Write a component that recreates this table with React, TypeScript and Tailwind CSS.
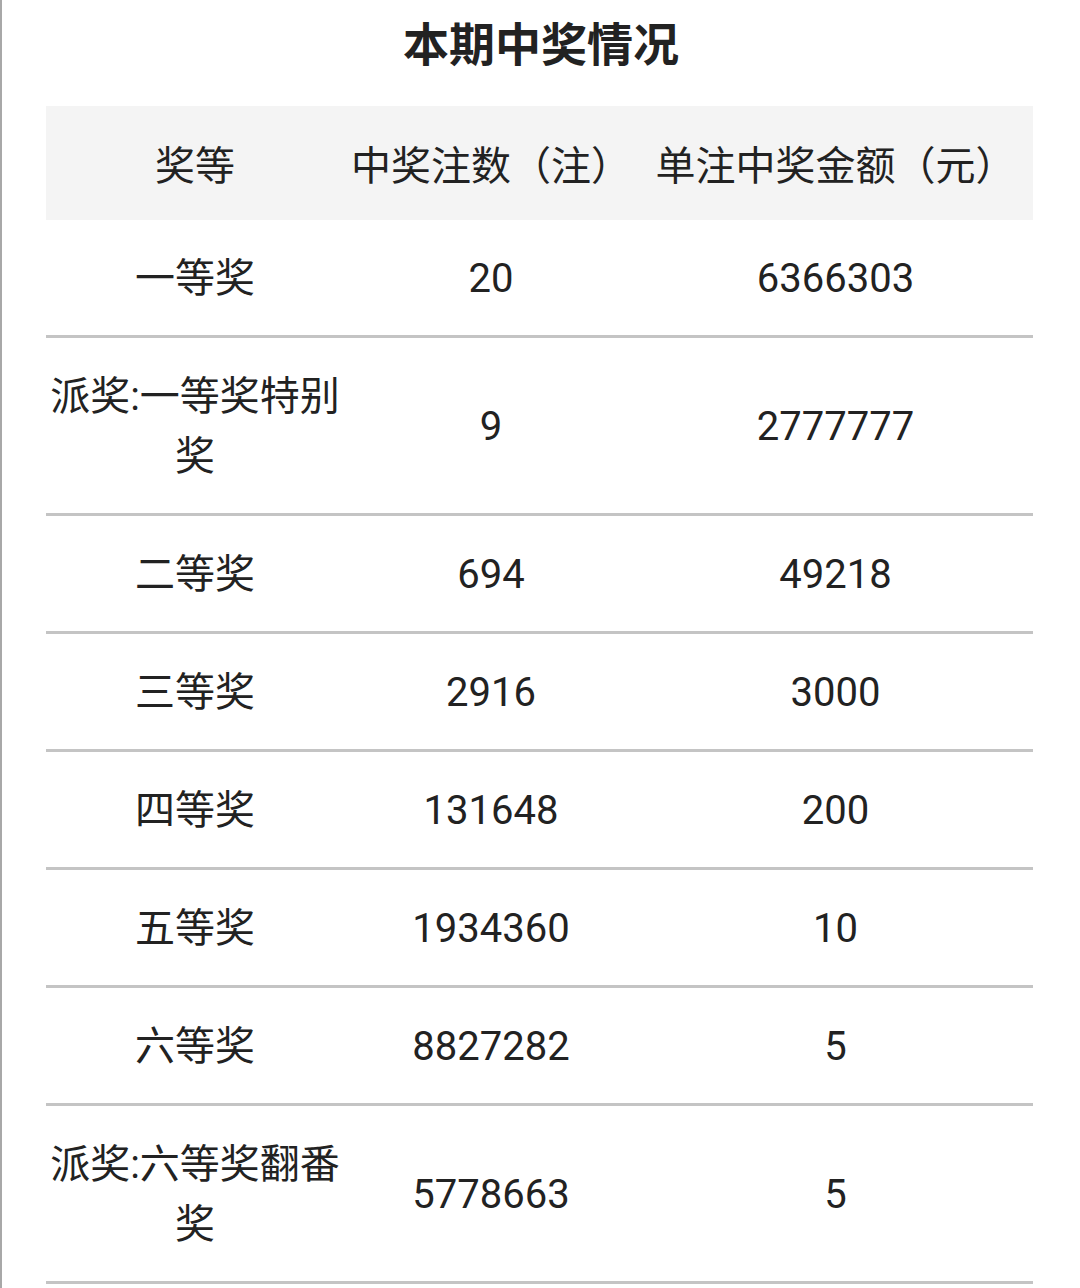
const rows: { level: string; count: string; amount: string }[] = [
  { level: "一等奖", count: "20", amount: "6366303" },
  { level: "派奖:一等奖特别奖", count: "9", amount: "2777777" },
  { level: "二等奖", count: "694", amount: "49218" },
  { level: "三等奖", count: "2916", amount: "3000" },
  { level: "四等奖", count: "131648", amount: "200" },
  { level: "五等奖", count: "1934360", amount: "10" },
  { level: "六等奖", count: "8827282", amount: "5" },
  { level: "派奖:六等奖翻番奖", count: "5778663", amount: "5" },
];

export default function App() {
  return (
    <div
      className="min-h-[1288px] w-[1080px] bg-white border-l-2 border-[#a8a8a8] text-[#222222]"
      style={{ fontFamily: 'Roboto, "Noto Sans CJK SC", sans-serif' }}
    >
      <h1 className="pt-[11px] text-center text-[46px] font-bold leading-[69px]">本期中奖情况</h1>

      <div className="ml-[44px] mt-[26px] w-[987px]">
        {/* header */}
        <div className="grid h-[114px] grid-cols-[298px_294px_395px] items-center bg-[#f4f4f4] pt-[8px] text-center text-[40px] leading-[60px]">
          <div>奖等</div>
          <div>中奖注数（注）</div>
          <div>单注中奖金额（元）</div>
        </div>

        {rows.map((r) => (
          <div
            key={r.level}
            className="grid grid-cols-[298px_294px_395px] items-center border-b-[3px] border-[#c4c4c4] pt-[29px] pb-[26px] text-center text-[40px] leading-[60px]"
          >
            <div>{r.level}</div>
            <div>{r.count}</div>
            <div>{r.amount}</div>
          </div>
        ))}
      </div>
    </div>
  );
}
